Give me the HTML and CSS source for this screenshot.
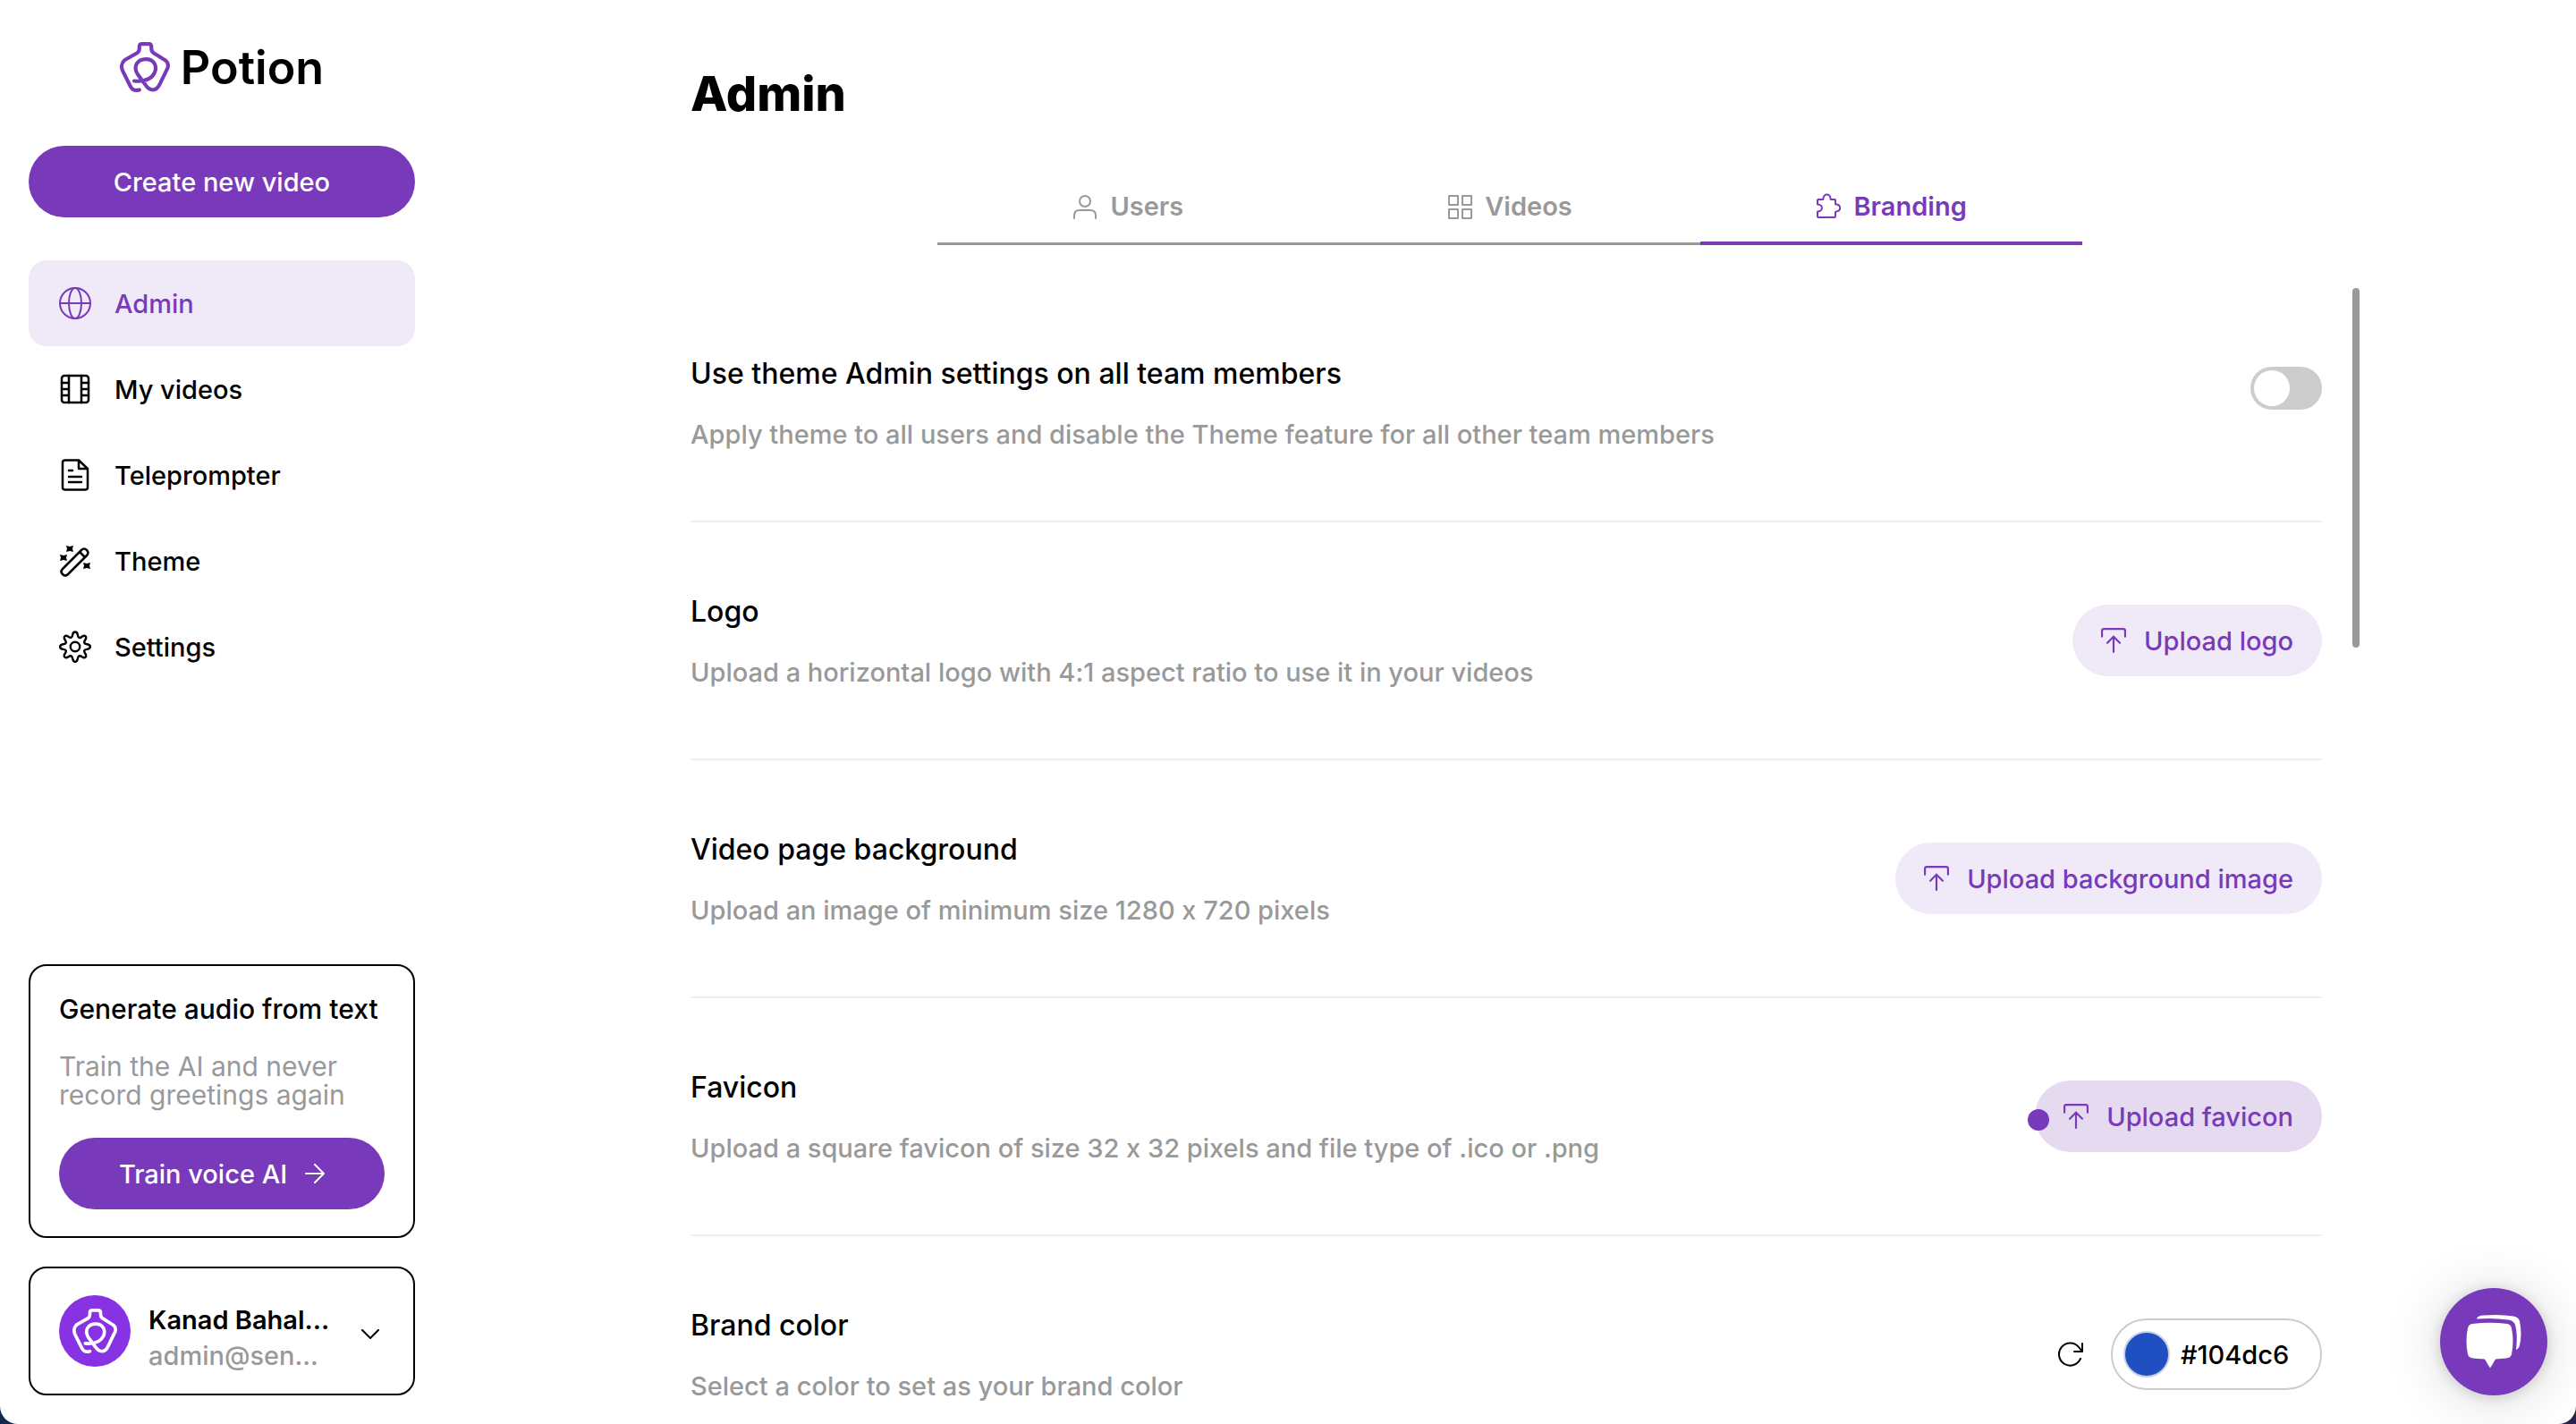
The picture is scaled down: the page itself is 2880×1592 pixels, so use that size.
FILE: index.html
```html
<!DOCTYPE html>
<html lang="en">
<head>
    <meta charset="UTF-8">
    <meta name="viewport" content="width=device-width, initial-scale=1.0">
    <title>Potion - Admin</title>
    <link rel="stylesheet" href="styles.css">
</head>
<body>
    <!-- shared icons -->
    <svg class="defs" aria-hidden="true">
        <symbol id="flask" viewBox="0 0 54 54">
            <path d="M21 51.5C15 53 13.500 51 11.500 48L3 31C1 26 1.500 23 5 19.500L19 11.500Q21 10 21 7V5Q21 2 24 2H31Q34 2 34 5V7Q34 10 36 11.500L49.500 20Q53 23 51.500 28L43 45.500C39 54 32 53 27.500 46L19 34.500C14 26 19 18.500 28 18.500C37 18.500 40.500 26 37.500 33C34.500 39.500 27 43 15.500 42"/>
        </symbol>
        <symbol id="upload" viewBox="0 0 26 26">
            <path d="M1 9V3Q1 1 3 1H23Q25 1 25 3V9M13 25V9M6.500 15.500L13 9L19.500 15.500"/>
        </symbol>
    </svg>

    <div class="page">
        <!-- sidebar -->
        <aside class="sidebar">
            <a href="#" class="logo">
                <svg class="logo-icon"><use href="#flask"/></svg>
                <span>Potion</span>
            </a>
            <button class="btn btn-primary">Create new video</button>
            <nav class="menu">
                <a href="#" class="menu-item active">
                    <svg class="icon" viewBox="0 0 36 36"><circle cx="18" cy="18" r="17"/><ellipse cx="18" cy="18" rx="7" ry="17"/><path d="M1 18H35"/></svg>
                    Admin
                </a>
                <a href="#" class="menu-item">
                    <svg class="icon" viewBox="0 0 36 36"><g stroke-width="2.5"><rect x="3" y="3" width="30" height="30" rx="3"/><path d="M11 3V33M25 3V33M3 11H11M3 18H11M3 25H11M25 11H33M25 18H33M25 25H33"/></g></svg>
                    My videos
                </a>
                <a href="#" class="menu-item">
                    <svg class="icon" viewBox="0 0 36 36"><g stroke-width="2.5"><path d="M22 1.500H7Q4 1.500 4 4V32Q4 34.500 7 34.500H29Q32 34.500 32 32V11ZM22 1.500V11H32M11 13H15M11 20H25M11 26H25"/></g></svg>
                    Teleprompter
                </a>
                <a href="#" class="menu-item">
                    <svg class="icon" viewBox="0 0 36 36"><g stroke-width="2.500"><path d="M4 27L25 6Q28 3 31 6T31 12L10 33Q7 36 4 33T4 27ZM23 8L29 14"/></g><path class="spark" d="M8 1L12 2L16 1L15 4.500L16 8L12 7L8 8L9 4.500ZM1 11L5 12L9 11L8 14.500L9 18L5 17L1 18L2 14.500ZM27 20L31 21L35 20L34 23.500L35 27L31 26L27 27L28 23.500Z"/></svg>
                    Theme
                </a>
                <a href="#" class="menu-item">
                    <svg class="icon" viewBox="0 0 24 24"><g stroke-width="1.600"><circle cx="12" cy="12" r="3.500"/><path d="M10.100 3.200C10.500 .200 13.500 .200 13.900 3.200C14.200 5.400 15.500 5.900 17 4.500C19.400 2.900 21.100 4.700 19.500 7C18.200 8.800 18.700 9.800 20.900 10.200C24 10.700 24 13.300 20.900 13.900C18.700 14.200 18.200 15.200 19.500 17C21 19.400 19.400 21.100 17 19.500C15.300 18.200 14.200 18.700 13.900 20.900C13.400 24 10.700 24 10.100 20.900C9.800 18.700 8.800 18.200 7 19.500C4.700 21.100 2.900 19.400 4.500 17C5.800 15.200 5.300 14.200 3.100 13.900C0 13.400 0 10.700 3.100 10.200C5.300 9.800 5.800 8.800 4.500 7C2.900 4.700 4.700 2.900 7 4.500C8.800 5.800 9.800 5.300 10.100 3.200Z"/></g></svg>
                    Settings
                </a>
            </nav>

            <section class="box voice">
                <h2>Generate audio from text</h2>
                <p>Train the AI and never record greetings again</p>
                <button class="btn btn-primary">
                    Train voice AI
                    <svg class="arrow" viewBox="0 0 22 22"><path d="M1 11H21M11 1L21 11L11 21"/></svg>
                </button>
            </section>

            <button class="box user">
                <span class="avatar"><svg><use href="#flask"/></svg></span>
                <span class="user-text">
                    <span class="user-name">Kanad Bahal...</span>
                    <span class="user-mail">admin@sen...</span>
                </span>
                <svg class="chevron" viewBox="0 0 20 12"><path d="M1 1L10 10L19 1"/></svg>
            </button>
        </aside>

        <!-- content -->
        <main class="main">
            <h1>Admin</h1>
            <div class="tabs" role="tablist">
                <button class="tab" role="tab">
                    <svg class="tab-icon" viewBox="0 0 28 28"><circle cx="14" cy="8" r="6"/><path d="M2 27V24Q2 18 8 18H20Q26 18 26 24V27"/></svg>
                    Users
                </button>
                <button class="tab" role="tab">
                    <svg class="tab-icon" viewBox="0 0 28 28"><path d="M2 2H12V12H2ZM17 2H27V12H17ZM2 17H12V27H2ZM17 17H27V27H17Z"/></svg>
                    Videos
                </button>
                <button class="tab active" role="tab" aria-selected="true">
                    <svg class="tab-icon" viewBox="0 0 28 28"><path d="M3 7H8Q8.500 7 8.500 6C8.500 0 16.500 0 16.500 6Q16.500 7 17 7H21Q22 7 22 8V12Q22 12.500 23 12.500C28.500 13 28.500 20 23 20.500Q22 20.500 22 21V26Q22 27 21 27H3Q2 27 2 26V20.500C8.500 20.500 8.500 12.500 2 12.500V8Q2 7 3 7Z"/></svg>
                    Branding
                </button>
            </div>

            <div class="scroller">
                <div class="rows">
                    <div class="row">
                        <div class="row-text">
                            <h3><label for="team-theme">Use theme Admin settings on all team members</label></h3>
                            <p>Apply theme to all users and disable the Theme feature for all other team members</p>
                        </div>
                        <input type="checkbox" class="toggle" id="team-theme">
                    </div>
                    <div class="row">
                        <div class="row-text">
                            <h3>Logo</h3>
                            <p>Upload a horizontal logo with 4:1 aspect ratio to use it in your videos</p>
                        </div>
                        <button class="btn btn-light"><svg class="up"><use href="#upload"/></svg>Upload logo</button>
                    </div>
                    <div class="row">
                        <div class="row-text">
                            <h3>Video page background</h3>
                            <p>Upload an image of minimum size 1280 x 720 pixels</p>
                        </div>
                        <button class="btn btn-light"><svg class="up"><use href="#upload"/></svg>Upload background image</button>
                    </div>
                    <div class="row">
                        <div class="row-text">
                            <h3>Favicon</h3>
                            <p>Upload a square favicon of size 32 x 32 pixels and file type of .ico or .png</p>
                        </div>
                        <button class="btn btn-light hovered"><svg class="up"><use href="#upload"/></svg>Upload favicon<span class="dot"></span></button>
                    </div>
                    <div class="row">
                        <div class="row-text">
                            <h3><label for="brand-color">Brand color</label></h3>
                            <p>Select a color to set as your brand color</p>
                        </div>
                        <div class="color">
                            <button class="reset" aria-label="Reset color">
                                <svg viewBox="0 0 30 28"><path d="M26 19A12.500 12.500 0 1 1 24 6L28 11M28 2V11H19"/></svg>
                            </button>
                            <div class="color-box">
                                <span class="swatch"></span>
                                <input type="text" id="brand-color" value="#104dc6">
                            </div>
                        </div>
                    </div>
                </div>
                <div class="thumb"></div>
            </div>
        </main>
    </div>

    <button class="chat" aria-label="Open chat">
        <svg viewBox="0 0 64 64"><path d="M13 6.500C14 3.500 17 2.500 21 2.500Q39 1 54 3.500Q60 4.500 61 9Q64 24 61 36Q60 40 57 41Q59 24 56 13Q54 8 48 7.500Q31 5 13 6.500Z"/><path d="M8 12Q28 9.500 47 12Q51 12.500 52 17Q55 31 52 46Q51 50 46 50.500Q40 51 34 51.500L29 60Q28 62 27 60L22 51.500Q14 51 9 50.500Q4 50 3 46Q0 31 3 17Q4 12.500 8 12Z"/></svg>
    </button>
</body>
</html>
```
FILE: styles.css
```css
* {
    box-sizing: border-box;
}

html {
    height: 100%;
    background: linear-gradient(90deg, #10284a, #29214d);
}

body {
    margin: 0;
    height: 100vh;
    font-family: Inter, "Open Sans", sans-serif;
    font-size: 29px;
    font-weight: 500;
    font-variant-ligatures: no-contextual;
    color: #000;
    overflow: hidden;
}

h1, h2, h3, p {
    margin: 0;
}

h2, h3 {
    font-weight: 500;
}

a {
    color: inherit;
    text-decoration: none;
}

button, input {
    font: inherit;
    font-variant-ligatures: no-contextual;
    color: inherit;
}

button {
    border: none;
    background: none;
    padding: 0;
    cursor: pointer;
}

svg {
    fill: none;
    stroke: currentColor;
    stroke-width: 2;
    stroke-linecap: round;
    stroke-linejoin: round;
    flex-shrink: 0;
}

.defs {
    display: none;
}

.page {
    display: flex;
    height: 100%;
    background: #fff;
    border-radius: 0 0 20px 20px;
    overflow: hidden;
}

/* sidebar */
.sidebar {
    width: 496px;
    flex-shrink: 0;
    padding: 44px 32px 32px;
    display: flex;
    flex-direction: column;
}

.logo {
    display: flex;
    align-items: center;
    justify-content: center;
    gap: 12px;
    height: 62px;
    font-size: 52px;
    font-weight: 600;
}

.logo-icon {
    width: 56px;
    height: 56px;
    color: #783aba;
    stroke-width: 4;
}

.sidebar > .btn {
    margin-top: 57px;
}

.btn {
    display: flex;
    align-items: center;
    justify-content: center;
    gap: 20px;
    height: 80px;
    padding: 0 32px;
    border-radius: 40px;
    white-space: nowrap;
}

.btn-primary {
    background: #783aba;
    color: #fff;
}

.btn-light {
    background: #f0eaf8;
    color: #783aba;
}

.btn-light.hovered {
    position: relative;
    background: #e6daf0;
}

.menu {
    margin-top: 48px;
    margin-bottom: auto;
}

.menu-item {
    display: flex;
    align-items: center;
    gap: 26px;
    height: 96px;
    padding: 0 34px;
    border-radius: 20px;
}

.menu-item.active {
    background: #f0eaf8;
    color: #783aba;
}

.icon {
    width: 36px;
    height: 36px;
}

.spark {
    fill: currentColor;
    stroke: none;
}

.box {
    border: 2px solid #000;
    border-radius: 20px;
    padding: 30px 32px;
}

.voice h2 {
    font-size: 30px;
    line-height: 36px;
    white-space: nowrap;
}

.voice p {
    margin: 30px 0 32px;
    font-size: 30px;
    font-weight: 400;
    line-height: 32px;
    color: #999;
}

.voice .btn {
    width: 100%;
}

.arrow {
    width: 22px;
    height: 22px;
}

.user {
    display: flex;
    align-items: center;
    margin-top: 32px;
    text-align: left;
}

.avatar {
    display: flex;
    align-items: center;
    justify-content: center;
    width: 80px;
    height: 80px;
    border-radius: 50%;
    background: #8833e3;
    color: #fff;
}

.avatar svg {
    width: 50px;
    height: 50px;
    stroke-width: 4;
}

.user-text {
    display: flex;
    flex-direction: column;
    flex: 1;
    margin-left: 20px;
    padding-top: 8px;
    line-height: 40px;
    margin-bottom: -8px;
}

.user-name {
    font-weight: 600;
}

.user-mail {
    color: #999;
}

.chevron {
    width: 20px;
    height: 12px;
    margin: 8px 6px 0 0;
}

/* content */
.main {
    flex: 1;
    min-width: 0;
    display: flex;
    flex-direction: column;
    padding: 74px 242px 0 276px;
}

h1 {
    font-size: 54px;
    font-weight: 800;
    line-height: 62px;
}

.tabs {
    display: grid;
    grid-template-columns: repeat(3, 1fr);
    width: 70%;
    max-width: 1280px;
    margin: 54px 0 44px 276px;
}

.tab {
    display: flex;
    align-items: center;
    justify-content: center;
    gap: 14px;
    height: 84px;
    border-bottom: 3px solid #999;
    font-weight: 600;
    color: #999;
}

.tab.active {
    border-bottom: 4px solid #783aba;
    color: #783aba;
}

.tab-icon {
    width: 28px;
    height: 28px;
}

.scroller {
    flex: 1;
    min-height: 0;
    display: flex;
    gap: 34px;
    overflow: hidden;
}

.rows {
    flex: 1;
}

.row {
    display: flex;
    align-items: flex-start;
    justify-content: space-between;
    padding: 80px 0;
    border-bottom: 2px solid #eee;
}

.row h3 {
    font-size: 32px;
    line-height: 40px;
}

.row p {
    margin-top: 32px;
    line-height: 32px;
    color: #999;
}

.row > .btn, .row > .toggle, .row > .color {
    margin: 12px 0 -12px;
}

/* toggle switch */
.toggle {
    appearance: none;
    display: flex;
    align-items: center;
    width: 80px;
    height: 48px;
    padding: 0 4px;
    border-radius: 24px;
    background: #ccc;
}

.toggle::before {
    content: "";
    width: 40px;
    height: 40px;
    border-radius: 50%;
    background: #fff;
}

.toggle:checked {
    justify-content: flex-end;
    background: #783aba;
}

.up {
    width: 28px;
    height: 28px;
}

.dot {
    position: absolute;
    left: -8px;
    top: 32px;
    width: 24px;
    height: 24px;
    border-radius: 50%;
    background: #783aba;
}

.color {
    display: flex;
    align-items: center;
    gap: 30px;
}

.reset svg {
    display: block;
    width: 30px;
    height: 28px;
}

.color-box {
    display: flex;
    align-items: center;
    gap: 12px;
    width: 236px;
    height: 80px;
    padding: 0 12px;
    border: 2px solid #ccc;
    border-radius: 40px;
}

.swatch {
    width: 52px;
    height: 52px;
    flex-shrink: 0;
    border: 2px solid #c8d0e4;
    border-radius: 50%;
    background: #1f4fc0;
}

.color-box input {
    width: 100%;
    min-width: 0;
    padding: 0;
    border: none;
    outline: none;
    background: none;
}

.thumb {
    width: 8px;
    height: 402px;
    margin-top: 4px;
    border-radius: 4px;
    background: #999;
}

/* chat bubble */
.chat {
    position: fixed;
    right: 32px;
    bottom: 32px;
    display: flex;
    align-items: center;
    justify-content: center;
    width: 120px;
    height: 120px;
    border-radius: 50%;
    background: #783aba;
    color: #fff;
    box-shadow: 0 2px 16px rgba(0, 0, 0, 0.16), 0 4px 64px rgba(0, 0, 0, 0.16);
}

.chat svg {
    width: 64px;
    height: 64px;
    fill: currentColor;
    stroke: none;
}
```
